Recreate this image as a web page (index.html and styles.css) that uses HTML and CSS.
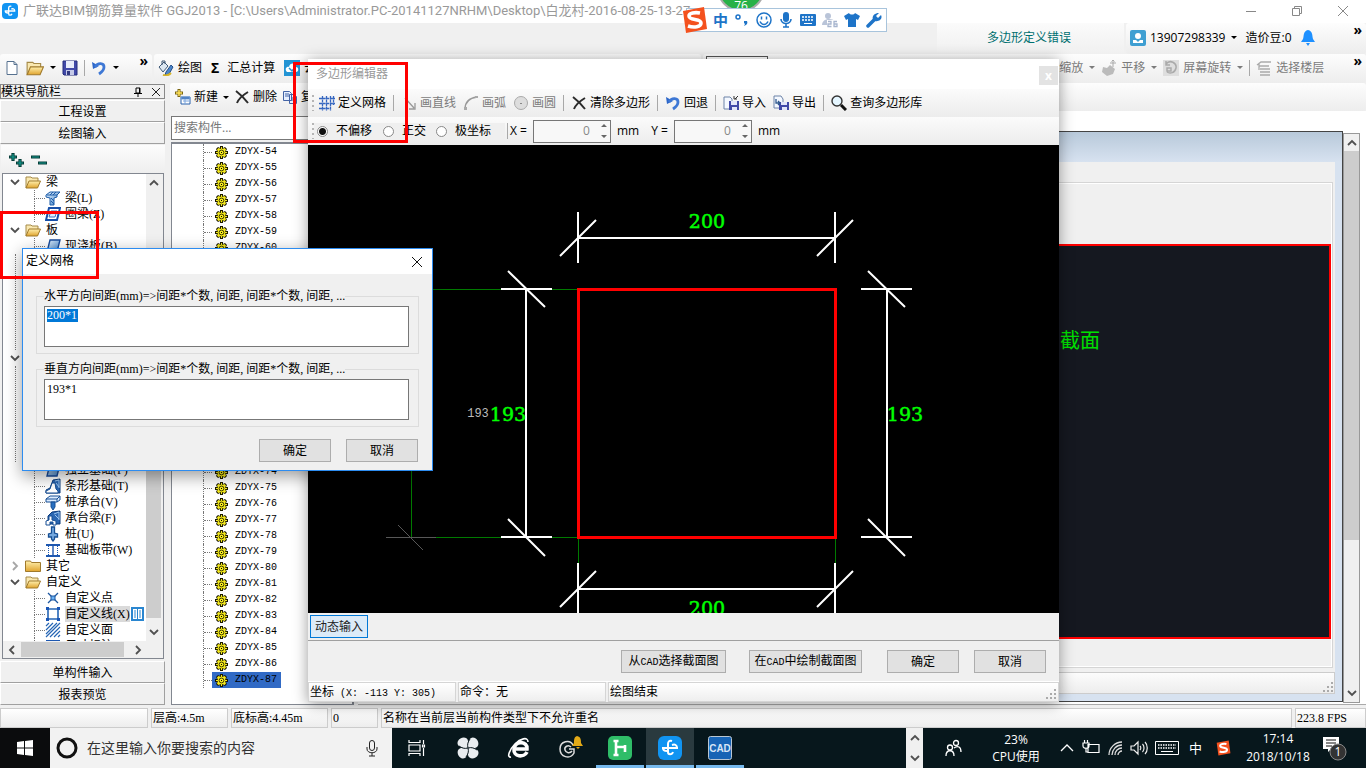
FILE: index.html
```html
<!DOCTYPE html>
<html lang="zh-CN">
<head>
<meta charset="utf-8">
<title>广联达BIM钢筋算量软件 GGJ2013</title>
<link rel="stylesheet" href="styles.css">
</head>
<body>
<svg class="defs" aria-hidden="true">
  <defs>
    <symbol id="gear" viewBox="0 0 13 13"><path d="M5 0h3v2l2-1 2 2-1 2h2v3h-2l1 2-2 2-2-1v2H5v-2l-2 1-2-2 1-2H0V5h2L1 3l2-2 2 1z" fill="#1c1a00"/><path d="M6 1h1v2l2.500-1L11 3.500 10 6h2v1h-2l1 2.500L9.500 11 7 10v2H6v-2l-2.500 1L2 9.500 3 7H1V6h2L2 3.500 3.500 2 6 3z" fill="#f5ea1c"/><circle cx="6.500" cy="6.500" r="2.400" fill="none" stroke="#2c2900" stroke-width=".9"/><path d="M6 6h1v1H6z" fill="#000"/></symbol>
    <linearGradient id="gold" x2="0" y2="1"><stop stop-color="#fff0ae"/><stop offset="1" stop-color="#e0a42e"/></linearGradient>
    <linearGradient id="steel" x2="1" y2="1"><stop stop-color="#e8f4ff"/><stop offset="1" stop-color="#3c80c8"/></linearGradient>
    <symbol id="open" viewBox="0 0 16 16"><path d="M1 14V3h5l1 1h6v3" fill="#f9e8b0" stroke="#a58a48"/><path d="M1 14L4 7h11.500l-3 7z" fill="url(#gold)" stroke="#a07a2c"/></symbol>
    <symbol id="folder" viewBox="0 0 16 16"><path d="M.5 13.500V3h5l1 1.500h9v9z" fill="url(#gold)" stroke="#a07a2c"/></symbol>
    <symbol id="down" viewBox="0 0 10 10"><path d="M1 3l4 4 4-4" fill="none" stroke="#505050" stroke-width="1.800"/></symbol>
    <symbol id="beam" viewBox="0 0 16 16"><path d="M1 5l4-3h10l-3 3v2l-3 1v7H5V8L1 7z" fill="url(#steel)" stroke="#1d5ca8"/><path d="M2 5h10M6 8l3 3M6 11l3 3M11 2l-3 3M8 2L5 5" stroke="#1d5ca8"/></symbol>
    <symbol id="ring" viewBox="0 0 16 16"><path d="M4 2h11l-3 12H1z" fill="#fff" stroke="#174fa8" stroke-width="2"/><path d="M6 5h6l-2 6H4z" fill="#dcecff" stroke="#3d73bd"/></symbol>
    <symbol id="slab" viewBox="0 0 16 16"><path d="M5 2h10l-3 12H2z" fill="url(#steel)" stroke="#184b9c" stroke-width="1.400"/></symbol>
    <symbol id="strip" viewBox="0 0 16 16"><path d="M1 15v-3l4-2 3-8 7-1v14z" fill="#2b67b2" stroke="#0d3c7d"/><path d="M10 3l4-1v8M11 5l3 4" stroke="#9cc6f0" fill="none"/><path d="M1 15v-2l4-2 2-6h3l1 6 2 2v2z" fill="#fff" stroke="#174f94"/></symbol>
    <symbol id="capbeam" viewBox="0 0 16 16"><path d="M3 6l4-4 8-1v13H3z" fill="#2b67b2" stroke="#0d3c7d"/><path d="M9 4l5-2v8M10 5l4 4" stroke="#9cc6f0" fill="none"/><path d="M1 15v-4l3-1V6h3v4l4 1v4H8v-3H5v3z" fill="#fff" stroke="#174f94"/></symbol>
    <symbol id="cap" viewBox="0 0 16 16"><path d="M1 5l4-3h10v4l-3 2H1z" fill="#dcecff" stroke="#174f94"/><path d="M1 5h11l3-3M12 5v3" fill="none" stroke="#174f94"/><path d="M6 8h4v5l-2 3-2-3z" fill="#276ec0" stroke="#174f94"/></symbol>
    <symbol id="pile" viewBox="0 0 16 16"><path d="M6.500 1h3v6l3 1v3h-3v2L8 15l-1.500-2v-2h-3V8l3-1z" fill="#74a8df" stroke="#174f94" stroke-width="1.300"/></symbol>
    <symbol id="band" viewBox="0 0 16 16"><path d="M1 3h14M1 14h14" stroke="#1d57b0" stroke-width="2"/><path d="M8 3v11" stroke="#1d57b0" stroke-width="1.400"/><path d="M3.500 4v9M12.500 4v9" stroke="#1d57b0" stroke-dasharray="1 1"/></symbol>
    <symbol id="point" viewBox="0 0 16 16"><path d="M3 3l10 10M13 3L3 13" stroke="#1d57a0" stroke-width="1.300"/><path d="M6 6h4v4H6z" fill="#6bb2f4" stroke="#1d57a0"/></symbol>
    <symbol id="line" viewBox="0 0 16 16"><path d="M3 3h10v10H3z" fill="none" stroke="#2565b5" stroke-width="1.600"/><path d="M1 1h3v3H1zM12 1h3v3h-3zM1 12h3v3H1zM12 12h3v3h-3z" fill="#1a55b5"/></symbol>
    <symbol id="face" viewBox="0 0 16 16"><path d="M1 4l3-3M1 8l7-7M1 12L12 1M1 15L15 1M5 15L15 5M9 15l6-6M13 15l2-2" stroke="#2565b5" stroke-width="1.200"/></symbol>
    <symbol id="cross" viewBox="0 0 16 16"><path d="M2 2c4 3 8 7 12 12M14 3C9 6 5 9 3 14" fill="none" stroke="#2b2b2b" stroke-width="2"/></symbol>
    <symbol id="undo" viewBox="0 0 16 16"><path d="M1 2l1 7 6-3z" fill="#2c66c9"/><path d="M4 7c3-5 9-4 9 0 0 3-2 5-5 7" fill="none" stroke="#3e78d5" stroke-width="2.800"/></symbol>
    <symbol id="disk" viewBox="0 0 16 16"><path d="M1 1h14v14H2L1 14z" fill="#4149a8" stroke="#252c7c"/><path d="M4 1h8v7H4z" fill="#e8ecfa"/><path d="M4 10h8v5H4z" fill="#c5cae8"/><path d="M5 11h3v4H5z" fill="#333a80"/></symbol>
    <symbol id="import" viewBox="0 0 16 16"><path d="M1 2h6l2 2v10H1z" fill="#f4f8ff" stroke="#6d83a8"/><path d="M6 6h10v9H6z" fill="#4149a8"/><path d="M8 6h6v4H8zM9 12h5v3H9z" fill="#e2e6fa"/><path d="M12 4l3-3M11 1v3h3" fill="none" stroke="#333"/></symbol>
    <symbol id="export" viewBox="0 0 16 16"><path d="M1 1h7l2 3v9H1z" fill="#f4f8ff" stroke="#6d83a8"/><path d="M6 7h10v8H6z" fill="#4149a8"/><path d="M8 7h6v3H8zM9 12h5v3H9z" fill="#e2e6fa"/><path d="M3 4v4h4M5 6l2 2-2 2" fill="none" stroke="#31598e" stroke-width="1.300"/></symbol>
    <symbol id="sogou" viewBox="0 0 28 28"><path d="M3 5l21-4 3 22-21 4z" fill="#f4511e"/><path d="M20 7c-5-1-11 0-11 3 0 5 12 2 12 7 0 4-7 5-13 3" fill="none" stroke="#fff" stroke-width="3.600"/></symbol>
    <symbol id="glodon" viewBox="0 0 24 24"><rect width="24" height="24" rx="6" fill="#1194f2"/><path d="M14 5c-3-1-4 1-4 3v8c0 3 4 3 5 0M4 12h16M5 12c0 3 2 3 4 3M14 9c3-1 5 0 5 3" fill="none" stroke="#fff" stroke-width="2"/></symbol>
  </defs>
</svg>

<div class="app">
  <header class="titlebar">
    <svg class="i16"><use href="#glodon"/></svg>
    <h1>广联达BIM钢筋算量软件 GGJ2013 - [C:\Users\Administrator.PC-20141127NRHM\Desktop\白龙村-2016-08-25-13-27-</h1>
    <div class="winbtns">
      <button aria-label="最小化"><svg viewBox="0 0 12 12"><path d="M1 6.500h10"/></svg></button>
      <button aria-label="还原"><svg viewBox="0 0 12 12"><path d="M1.500 3.500h7v7h-7zM3.500 3V1.500h7v7H9"/></svg></button>
      <button aria-label="关闭"><svg viewBox="0 0 12 12"><path d="M1 1l10 10M11 1L1 11"/></svg></button>
    </div>
  </header>

  <div class="accountbar">
    <a href="#" class="errlink">多边形定义错误</a>
    <div class="account bar">
      <svg class="i16" viewBox="0 0 16 16"><rect width="16" height="16" rx="2" fill="#3f9fd2"/><circle cx="8" cy="6" r="3" fill="#fff"/><path d="M3 13v-3h3l2 2 2-2h3v3z" fill="#fff"/></svg>
      <button class="tb">13907298339 <i class="caret"></i></button>
      <span>造价豆:0</span>
      <svg class="i16" viewBox="0 0 16 16"><path d="M8 0c5 1 4 6 5 9l2 3H1l2-3c1-3 0-8 5-9zM6 13h4l-2 3z" fill="#1e90ff"/></svg>
      <b class="more">»</b>
    </div>
  </div>

  <div class="toolbars">
    <div class="bar files">
      <button class="tb" aria-label="新建文件"><svg class="i16" viewBox="0 0 16 16"><path d="M3 1.500h7l3 3v10H3z" fill="#fff" stroke="#56718f"/><path d="M10 1.500v3h3" fill="none" stroke="#56718f"/></svg></button>
      <button class="tb" aria-label="打开"><svg class="i18"><use href="#open"/></svg><i class="caret"></i></button>
      <button class="tb" aria-label="保存"><svg class="i16"><use href="#disk"/></svg></button>
      <i class="sep"></i>
      <button class="tb" aria-label="撤销"><svg class="i16"><use href="#undo"/></svg><i class="caret"></i></button>
      <b class="more">»</b>
    </div>
    <div class="bar draw">
      <button class="tb"><svg class="i16" viewBox="0 0 16 16"><path d="M1 7l5-5 4 4-5 6z" fill="#dce7f2" stroke="#3f5977"/><path d="M4 5V1h3v3" fill="none" stroke="#3f5977"/><path d="M8 12l5-7 2 2-4 7-4 1z" fill="#4b85cb" stroke="#244f89"/><path d="M5 15c3 1 6 0 8-2" fill="none" stroke="#d6b42b" stroke-width="2"/></svg>绘图</button>
      <button class="tb"><b class="sigma">Σ</b>汇总计算</button>
      <button class="tb"><svg class="i16" viewBox="0 0 16 16"><path d="M0 0h16v16H0z" fill="#2394d4"/><path d="M3 12c-3-3 0-6 2-5 1-5 7-4 7 0 3 0 3 5 0 5z" fill="#fff"/><path d="M5 8l3 3 5-6" fill="none" stroke="#2394d4" stroke-width="1.500"/></svg>云</button>
    </div>
    <div class="bar view">
      <input class="floor" aria-label="楼层">
      <button class="tb off push">缩放 <i class="caret"></i></button>
      <button class="tb off"><svg class="i16" viewBox="0 0 16 16"><path d="M2 7l4 1 3-3 5 4-2 5-6 2-5-4z" fill="#bbb"/><path d="M12 0v7M9 3h6M10.500 1.500L12 0l1.500 1.500" fill="none" stroke="#aaa"/></svg>平移 <i class="caret"></i></button>
      <button class="tb off"><svg class="i16" viewBox="0 0 16 16"><path d="M0 0h16v16H0z" fill="#dedede"/><path d="M3 4c4-5 11-1 10 4s-6 6-9 4M3 1v4h4M4 8h4v3H4z" fill="none" stroke="#aaa" stroke-width="1.500"/></svg>屏幕旋转<i class="caret"></i></button>
      <i class="sep"></i>
      <button class="tb off"><svg class="i16" viewBox="0 0 16 16"><path d="M1 5l4-3h10M3 6h10M4 9h10M4 12h10M4 15h10M3 4v6" fill="none" stroke="#aaa" stroke-width="1.300"/></svg>选择楼层</button>
      <b class="more">»</b>
    </div>
  </div>

  <main class="work">
    <aside class="nav">
      <div class="navhead"><span>模块导航栏</span>
        <button aria-label="固定"><svg viewBox="0 0 10 10"><path d="M3 1h4v5H3zM1 6.500h8M5 7v3M6.500 1v5" fill="none" stroke="#000"/></svg></button>
        <button aria-label="关闭导航"><svg viewBox="0 0 10 10"><path d="M1 1l8 8M9 1L1 9" stroke="#222"/></svg></button>
      </div>
      <button class="navbtn">工程设置</button>
      <button class="navbtn">绘图输入</button>
      <div class="fold"><svg viewBox="0 0 40 16" aria-label="展开 折叠"><path d="M1 4h8M5 0v8M8 10h8M12 6v8M23 4h9M30 10h9" stroke="#063d38" stroke-width="3.200" fill="none"/><path d="M2 4h6M5 1v6M9 10h6M12 7v6M24 4h7M31 10h7" stroke="#159a8d" stroke-width="1.200" fill="none"/></svg></div>
      <div class="treebox">
        <div class="treeview">
          <ul class="tree">
            <li class="g"><svg class="ch"><use href="#down"/></svg><svg class="i16"><use href="#open"/></svg>梁</li>
            <li class="c"><svg class="i16"><use href="#beam"/></svg>梁(L)</li>
            <li class="c"><svg class="i16"><use href="#ring"/></svg>圈梁(Z)</li>
            <li class="g"><svg class="ch"><use href="#down"/></svg><svg class="i16"><use href="#open"/></svg>板</li>
            <li class="c"><svg class="i16"><use href="#slab"/></svg>现浇板(B)</li>
            <li class="run"></li>
            <li class="g"><svg class="ch"><use href="#down"/></svg><svg class="i16"><use href="#open"/></svg>基础</li>
            <li class="run"></li>
            <li class="c"><svg class="i16"><use href="#slab"/></svg>独立基础(P)</li>
            <li class="c"><svg class="i16"><use href="#strip"/></svg>条形基础(T)</li>
            <li class="c"><svg class="i16"><use href="#cap"/></svg>桩承台(V)</li>
            <li class="c"><svg class="i16"><use href="#capbeam"/></svg>承台梁(F)</li>
            <li class="c"><svg class="i16"><use href="#pile"/></svg>桩(U)</li>
            <li class="c"><svg class="i16"><use href="#band"/></svg>基础板带(W)</li>
            <li class="g"><svg class="ch shut"><use href="#down"/></svg><svg class="i16"><use href="#folder"/></svg>其它</li>
            <li class="g"><svg class="ch"><use href="#down"/></svg><svg class="i16"><use href="#open"/></svg>自定义</li>
            <li class="c"><svg class="i16"><use href="#point"/></svg>自定义点</li>
            <li class="c sel"><svg class="i16"><use href="#line"/></svg><span class="pick">自定义线(X)</span><svg class="note" viewBox="0 0 13 14"><path d="M0 0h13v14H0z" fill="#2a86d0"/><path d="M2 2h4v10H2zM7 2h4v10H7z" fill="#fff"/><path d="M3 4h2M3 6h2M3 8h2M3 10h2M8 4h2M8 6h2M8 8h2M8 10h2" stroke="#2a86d0"/></svg></li>
            <li class="c"><svg class="i16"><use href="#face"/></svg>自定义面</li>
            <li class="c"><svg class="i16"><use href="#band"/></svg>尺寸标注(W)</li>
          </ul>
          <div class="vscroll"><svg class="up"><use href="#down"/></svg><i class="thumb"></i><svg><use href="#down"/></svg></div>
        </div>
        <div class="hscroll"><svg class="lf"><use href="#down"/></svg><i class="thumb"></i><svg class="rt"><use href="#down"/></svg></div>
      </div>
      <button class="navbtn">单构件输入</button>
      <button class="navbtn">报表预览</button>
    </aside>

    <div class="rest">
      <div class="bar parts">
        <button class="tb"><svg class="i16" viewBox="0 0 16 16"><path d="M4 0v8M0 4h8" stroke="#7a6510" stroke-width="3"/><path d="M4 1v6M1 4h6" stroke="#ffe25a" stroke-width="1.500"/><path d="M6 8h9v7H6z" fill="#fff" stroke="#2a62ad"/><path d="M6 8h9v2H6zM8 12h6M10 10v5" fill="#2a62ad" stroke="#7aa5dd"/></svg>新建<i class="caret"></i></button>
        <button class="tb"><svg class="i16"><use href="#cross"/></svg>删除</button>
        <button class="tb"><svg class="i16" viewBox="0 0 16 16"><path d="M1.500 2.500h6l2 2v7h-8zM7.500 5.500h5l2 2v7h-7z" fill="#e6efff" stroke="#4363a5"/><path d="M3 5h4M3 7h4M9 9h4M9 11h4" stroke="#4363a5"/></svg>复制</button>
      </div>
      <div class="panes">
        <section class="parts-list">
          <input class="search" placeholder="搜索构件..." aria-label="搜索构件">
          <ul class="zlist" id="zlist"></ul>
        </section>
        <section class="stage">
          <div class="mdi">
            <div class="mdi-in">
              <div class="mdi-group"><div class="preview">截面</div></div>
              <div class="mdi-status"><svg class="grip"><path d="M8 1h2M8 5h2M8 9h2M4 5h2M4 9h2M0 9h2" stroke="#aaa" stroke-width="2"/></svg></div>
            </div>
          </div>
          <div class="vscroll big"><svg class="up"><use href="#down"/></svg><i class="thumb"></i><svg><use href="#down"/></svg></div>
        </section>
      </div>
    </div>
  </main>

  <footer class="status">
    <span class="s1"></span><span class="s2">层高:4.5m</span><span class="s3">底标高:4.45m</span><span class="s4">0</span><span class="s5">名称在当前层当前构件类型下不允许重名</span><span class="s6">223.8 FPS</span>
  </footer>

  <nav class="taskbar">
    <button class="start" aria-label="开始"><svg class="i16" viewBox="0 0 16 16"><path d="M0 2l7-1v6.500H0zM8 1l8-1v7.500H8zM0 8.500h7V15l-7-1zM8 8.500h8V16l-8-1z" fill="#fff"/></svg></button>
    <div class="cortana"><svg viewBox="0 0 22 22" class="i22"><circle cx="11" cy="11" r="9" fill="none" stroke="#111" stroke-width="3"/></svg><input aria-label="搜索" placeholder="在这里输入你要搜索的内容"><svg class="i18" viewBox="0 0 18 18"><rect x="6.500" y="1.500" width="5" height="10" rx="2.500" fill="none" stroke="#222"/><path d="M4 8v2c0 5 10 5 10 0V8M9 14v3M6 17h6" fill="none" stroke="#222"/></svg></div>
    <div class="apps">
      <button aria-label="任务视图"><svg viewBox="0 0 24 24"><path d="M4 4V6.500h11V4M4 20v-2.500h11V20M4 9h11v6H4zM18.500 4v4M18.500 12v8M17.500 9h2v2h-2z" fill="none" stroke="#fff" stroke-width="1.200"/></svg></button>
      <button aria-label="浏览器"><svg viewBox="0 0 24 24"><g fill="#e9edf0"><path d="M12 12C4 13 0 9 2 5s9-5 10 0z"/><path d="M12 12c-1-8 3-12 7-10s5 9 0 10z"/><path d="M12 12c8-1 12 3 10 7s-9 5-10 0z"/><path d="M12 12c1 8-3 12-7 10s-5-9 0-10z"/></g><path d="M12 12c-1-4 0-6 2-9M12 12c4-1 6 0 9 2M12 12c1 4 0 6-2 9M12 12c-4 1-6 0-9-2" stroke="#08161c" fill="none"/></svg></button>
      <button aria-label="IE"><svg viewBox="0 0 24 24"><path d="M20 16c-3 6-14 5-13-3 1-9 14-8 13 0H8" fill="none" stroke="#fff" stroke-width="3.600"/><path d="M4 21c-5 1-1-8 4-13S21 0 21 6" fill="none" stroke="#fff" stroke-width="1.600"/></svg></button>
      <button aria-label="管家"><svg viewBox="0 0 30 24" class="wide"><path d="M18 9c-3-6-13-4-13 4s10 11 14 4v-4h-5M16 11c-3-3-7 0-6 3s5 4 7 1" fill="none" stroke="#ddd" stroke-width="1.500"/><path d="M22 0c4 1 4 4 4 7l2 3H17l2-3c0-3 0-6 3-7zM21 11h4l-2 2z" fill="#e3aa17"/></svg></button>
      <button aria-label="绿色应用" class="run"><svg viewBox="0 0 24 24"><rect width="24" height="24" rx="5" fill="#2fbd68"/><path d="M8 5v14M5.500 5h5M5.500 19h5M8 11h10M17 9v7" stroke="#fff" stroke-width="2.600" fill="none"/></svg></button>
      <button aria-label="广联达" class="run active"><svg><use href="#glodon"/></svg></button>
      <button aria-label="CAD" class="run"><svg viewBox="0 0 24 24"><rect x=".5" y=".5" width="23" height="23" rx="2" fill="#1764b5" stroke="#b9c6d2"/><text x="12" y="16" text-anchor="middle" class="cadtext">CAD</text></svg></button>
    </div>
    <div class="tscroll"><svg class="up"><use href="#down"/></svg><svg><use href="#down"/></svg></div>
    <div class="tray">
      <svg class="i18 people" viewBox="0 0 18 18"><g fill="none" stroke="#fff" stroke-width="1.300"><circle cx="12" cy="4" r="2.500"/><circle cx="6" cy="8.500" r="2.500"/><path d="M2 17c0-7 8-7 8 0M10 9c4-3 7-1 7 4"/></g></svg>
      <div class="cpu">23%<br>CPU使用</div>
      <svg class="i16" viewBox="0 0 16 16"><path d="M2 11l6-6 6 6" fill="none" stroke="#fff" stroke-width="1.300"/></svg>
      <svg class="i18" viewBox="0 0 18 18"><path d="M6 5.500h11v8H6zM17 8v3M1 4h6v3c0 3-6 3-6 0zM2.500 4V1M5.500 4V1M4 9v4h2" fill="none" stroke="#fff" stroke-width="1.200"/></svg>
      <svg class="i16" viewBox="0 0 16 16"><g fill="none" stroke="#ddd" stroke-width="1.300"><path d="M2 15C2 8 8 2 15 2M5 15c0-5 4-10 10-10M8 15c0-4 3-7 7-7M11 15c0-2 2-4 4-4"/></g></svg>
      <svg class="i18" viewBox="0 0 18 18"><path d="M1 7h3l4-4v12l-4-4H1zM10 7c1 1 1 3 0 4M12.500 5c2 2 2 6 0 8M15 3c3 3 3 9 0 12" fill="none" stroke="#eee" stroke-width="1.200"/></svg>
      <svg class="kb" viewBox="0 0 24 14"><path d="M.5.500h23v13H.5z" fill="none" stroke="#fff"/><path d="M3 4h18M3 7h18" stroke="#fff" stroke-width="1.400" stroke-dasharray="1.500 1"/><path d="M6 10.500h12" stroke="#fff"/></svg>
      <span class="ime">中</span>
      <svg class="i16"><use href="#sogou"/></svg>
      <div class="clock">17:14<br>2018/10/18</div>
      <svg class="bell" viewBox="0 0 26 26"><path d="M1 2h16v12H9l-3 3v-3H1z" fill="#fff"/><path d="M4 5h10M4 8h10M4 11h6" stroke="#111"/><circle cx="16" cy="17" r="8" fill="#333" stroke="#888"/><text x="16" y="21" text-anchor="middle" class="belltext">1</text></svg>
    </div>
  </nav>
</div>

<section class="editor" aria-label="多边形编辑器">
  <div class="ehead"><h2>多边形编辑器</h2><button class="eclose" aria-label="关闭编辑器">x</button></div>
  <div class="ebar">
    <i class="handle"></i>
    <button class="tb"><svg class="i16" viewBox="0 0 16 16"><path d="M0 3.500h16M0 8.500h16M0 13.500h12M3.500 1v15M7.500 1v15M11.500 1v15M14.500 1v9" stroke="#3566c0" stroke-width="1.300" stroke-dasharray="3 .6"/></svg>定义网格</button>
    <i class="sep"></i>
    <button class="tb off"><svg class="i16" viewBox="0 0 16 16"><path d="M4 3l9 10M14 8v6H8" fill="none" stroke="#999" stroke-width="1.300"/></svg>画直线</button>
    <button class="tb off"><svg class="i16" viewBox="0 0 16 16"><path d="M2 14C2 7 7 3 14 2" fill="none" stroke="#999" stroke-width="1.300"/><path d="M1 12h3v3H1zM12 1h3v2h-3z" fill="#aaa"/></svg>画弧</button>
    <button class="tb off"><svg class="i16" viewBox="0 0 16 16"><circle cx="8" cy="8" r="6.500" fill="#ddd" stroke="#aaa"/><path d="M7 8h2v1H7z" fill="#888"/></svg>画圆</button>
    <i class="sep"></i>
    <button class="tb"><svg class="i16"><use href="#cross"/></svg>清除多边形</button>
    <i class="sep"></i>
    <button class="tb"><svg class="i16"><use href="#undo"/></svg>回退</button>
    <i class="sep"></i>
    <button class="tb"><svg class="i16"><use href="#import"/></svg>导入</button>
    <button class="tb"><svg class="i16"><use href="#export"/></svg>导出</button>
    <i class="sep"></i>
    <button class="tb"><svg class="i16" viewBox="0 0 16 16"><circle cx="6" cy="6" r="5" fill="#e5f6ff" stroke="#333" stroke-width="1.400"/><path d="M10 10l5 5" stroke="#111" stroke-width="3"/></svg>查询多边形库</button>
  </div>
  <div class="ebar opts">
    <i class="handle"></i>
    <div class="radios">
      <label><input type="radio" name="off" checked>不偏移</label>
      <label><input type="radio" name="off">正交</label>
      <label><input type="radio" name="off">极坐标</label>
    </div>
    <i class="sep"></i>
    <label class="coord">X = <span class="spin"><input value="0"><svg viewBox="0 0 8 16"><path d="M1 4l3-3 3 3zM1 12l3 3 3-3z"/></svg></span>mm</label>
    <label class="coord">Y = <span class="spin"><input value="0"><svg viewBox="0 0 8 16"><path d="M1 4l3-3 3 3zM1 12l3 3 3-3z"/></svg></span>mm</label>
  </div>
  <svg class="canvas" viewBox="308 145 751 468" preserveAspectRatio="xMidYMid slice">
    <g stroke="#007a00" fill="none"><path d="M411 289.500h167M411 537.500h167M411.500 289v248M578.500 539v24M835.500 539v24"/></g>
    <g stroke="#585858" fill="none"><path d="M386 537.500h50M398 525l25 25"/></g>
    <g stroke="#fff" stroke-width="2" fill="none">
      <path d="M578 238h257M578 212v51M835 212v51M560 256l36-36M817 256l36-36"/>
      <path d="M578 589h257M578 563v52M835 563v52M560 607l36-36M817 607l36-36"/>
      <path d="M526 289v248M501 289h51M501 537h51M508 271l37 36M508 519l37 37"/>
      <path d="M887 289v248M861 289h51M861 537h51M868 271l37 36M868 519l37 37"/>
    </g>
    <path d="M578.500 289.500h257v248h-257z" fill="none" stroke="#f00" stroke-width="3"/>
    <g class="dims"><text x="707" y="228">200</text><text x="707" y="615">200</text><text x="508" y="421">193</text><text x="905" y="421">193</text></g>
    <text class="dimsmall" x="478" y="417">193</text>
  </svg>
  <div class="dyn"><button>动态输入</button></div>
  <div class="actions">
    <button class="btn cad">从<span class="hw">CAD</span>选择截面图</button>
    <button class="btn cad wide">在<span class="hw">CAD</span>中绘制截面图</button>
    <button class="btn">确定</button>
    <button class="btn">取消</button>
  </div>
  <div class="estatus"><span>坐标<b class="hw"> (X: -113 Y: 305)</b></span><span>命令：无</span><span class="fill">绘图结束<svg class="grip"><path d="M8 1h2M8 5h2M8 9h2M4 5h2M4 9h2M0 9h2" stroke="#aaa" stroke-width="2"/></svg></span></div>
</section>

<form class="dialog" aria-label="定义网格">
  <div class="dhead"><h2>定义网格</h2><button type="button" aria-label="关闭对话框"><svg viewBox="0 0 12 12"><path d="M1 1l10 10M11 1L1 11" stroke="#111"/></svg></button></div>
  <div class="dbody">
    <fieldset><legend><label for="hor">水平方向间距(mm)=&gt;间距*个数, 间距, 间距*个数, 间距, ...</label></legend>
      <div class="field hot"><textarea id="hor">200*1</textarea></div></fieldset>
    <fieldset><legend><label for="ver">垂直方向间距(mm)=&gt;间距*个数, 间距, 间距*个数, 间距, ...</label></legend>
      <div class="field"><textarea id="ver">193*1</textarea></div></fieldset>
    <div class="dbtns"><button type="button" class="btn">确定</button><button type="button" class="btn">取消</button></div>
  </div>
</form>

<div class="mark mark-grid"></div>
<div class="mark mark-title"></div>

<div class="badge76">76</div>
<div class="imebar">
  <svg class="slogo"><use href="#sogou"/></svg>
  <b>中</b>
  <svg viewBox="0 0 16 16"><circle cx="4" cy="5" r="2" fill="none" stroke="#1e74c8" stroke-width="1.500"/><path d="M10 9h3c1 2 0 4-3 5l1-2-1-1z" fill="#1e74c8"/></svg>
  <svg viewBox="0 0 16 16"><circle cx="8" cy="8" r="7" fill="none" stroke="#1e74c8" stroke-width="1.500"/><path d="M5.500 4.500v3M10.500 4.500v3M4 9.500c2 4 6 4 8 0" fill="none" stroke="#1e74c8" stroke-width="1.500"/></svg>
  <svg viewBox="0 0 16 16"><rect x="5" width="6" height="10" rx="3" fill="#1e74c8"/><path d="M3 7c0 6 10 6 10 0M8 12v3M5 15h6" fill="none" stroke="#1e74c8" stroke-width="1.600"/></svg>
  <svg viewBox="0 0 16 16"><rect y="2" width="16" height="12" rx="1" fill="#1e74c8"/><path d="M2 5h12M2 8h12" stroke="#fff" stroke-width="1.500" stroke-dasharray="2 1"/><path d="M4 11.500h8" stroke="#fff"/></svg>
  <svg viewBox="0 0 16 16"><circle cx="6" cy="4" r="3" fill="#b9c4d8"/><path d="M0 13c0-7 11-7 12-4v4z" fill="#b9c4d8"/><path d="M5 8h11v8H5z" fill="#fff"/><path d="M6 9.500h3v2.500H6v2.500h3.500M15 9.500h-3v5h3V12h-3" fill="none" stroke="#a7b5ce" stroke-width="1.300"/></svg>
  <svg viewBox="0 0 16 16"><path d="M5 1c1 2 5 2 6 0l5 3-2 4-2-1v8H4V7L2 8 0 4z" fill="#1e74c8"/></svg>
  <svg viewBox="0 0 16 16"><path d="M2 14l7-7" stroke="#1e74c8" stroke-width="3.500" stroke-linecap="round"/><path d="M13 1l-3 3 2 2 3-3c2 4-2 7-6 6S6 1 13 1z" fill="#1e74c8"/></svg>
</div>
<script src="app.js"></script>
</body>
</html>
```
FILE: styles.css
```css
* { box-sizing: border-box; }
html, body { height: 100%; margin: 0; overflow: hidden; }
body { font: 12px/16px "Open Sans", "Noto Sans CJK SC", sans-serif; color: #000; background: #f0f0f0; }
button, input, textarea { font: inherit; color: inherit; margin: 0; padding: 0; border: 0; background: none; border-radius: 0; white-space: nowrap; }
h1, h2, ul, fieldset, legend { margin: 0; padding: 0; border: 0; font-size: 12px; font-weight: 400; list-style: none; }
svg { display: block; flex: none; }
.defs { position: absolute; width: 0; height: 0; }
.i16 { width: 16px; height: 16px; }
.i18 { width: 18px; height: 18px; }
.i22 { width: 22px; height: 22px; }
.hw { font: 10px/16px "Liberation Mono", monospace; white-space: pre; }
.tree, .status, legend, .field { font-family: "Liberation Serif", "Noto Sans CJK SC", serif; }
.app { height: 100%; display: flex; flex-direction: column; }

.titlebar { flex: none; height: 23px; background: #fff; display: flex; align-items: center; gap: 5px; padding: 0 0 2px 2px; color: #999; }
.titlebar h1 { flex: 1; white-space: nowrap; overflow: hidden; font: 13px/20px Roboto, "Noto Sans CJK SC", sans-serif; }
.winbtns { display: flex; }
.winbtns button { width: 46px; height: 20px; display: grid; place-items: center; }
.winbtns svg { width: 12px; height: 12px; fill: none; stroke: #888; }

.bar { display: flex; align-items: center; background: linear-gradient(#fdfdfd, #ededed); border-radius: 3px; }
.tb { display: flex; align-items: center; gap: 4px; }
.off { color: #7b7b7b; }
.caret { border: 3px solid transparent; border-top-color: currentColor; border-bottom: 0; margin-left: 2px; }
.sep { width: 1px; height: 16px; background: #a8a8a8; }
.more { font-size: 14px; line-height: 14px; margin-left: auto; align-self: flex-start; }

.accountbar { flex: none; height: 31px; display: flex; justify-content: flex-end; gap: 2px; }
.errlink { width: 187px; padding: 7px 0 0 50px; color: #007070; text-decoration: none; background: linear-gradient(#fbfbfb, #f0f0f0); }
.account { width: 240px; gap: 4px; padding: 0 4px 2px 4px; }
.account span { margin: 0 4px; }

.toolbars { flex: none; height: 29px; display: flex; gap: 2px; }
.files { width: 152px; gap: 6px; padding: 0 4px 2px 4px; }
.draw { flex: 1; gap: 9px; padding: 0 0 2px 4px; }
.view { flex: 0 0 663px; gap: 6px; padding: 0 4px 2px 3px; }
.floor { width: 62px; height: 23px; border: 1px solid #555; background: #fff; }
.push { margin-left: auto; }
.view .more { margin-left: 23px; }
.sigma { font-size: 14px; margin-right: 4px; }

.work { flex: 1; min-height: 0; display: flex; gap: 5px; }
.nav { flex: 0 0 165px; display: flex; flex-direction: column; padding: 1px 0 0; }
.navhead { display: flex; align-items: center; gap: 8px; height: 15px; border: 1px solid #888; margin-bottom: 1px; padding-right: 3px; }
.navhead span { flex: 1; }
.navhead svg { width: 10px; height: 10px; }
.navbtn { height: 22px; background: #f0f0f0; border: 1px solid #a0a0a0; border-top-color: #fff; border-left-color: #fff; flex: none; padding-top: 1px; }
.fold { height: 28px; padding: 8px 0 0 7px; background: linear-gradient(#fcfcfc, #eee); margin: 1px 0 0 1px; }
.fold svg { width: 40px; height: 16px; }
.treebox { flex: 1; min-height: 0; display: flex; flex-direction: column; margin: 0 1px 2px 2px; border: 1px solid #828790; background: #f0f0f0; }
.treeview { flex: 1; min-height: 0; display: flex; }
.tree { flex: 1; min-width: 0; background: #fff; overflow: hidden; }
.tree li { height: 16px; display: flex; align-items: center; white-space: nowrap; }
.g { padding-left: 7px; gap: 5px; }
.ch { width: 10px; height: 10px; }
.ch.shut { transform: rotate(-90deg); opacity: .5; }
.c { padding-left: 31px; position: relative; }
.c > .i16 { margin: 0 4px 0 11px; }
.c::before { content: ""; position: absolute; left: 31px; top: 0; width: 10px; height: 8px; border-left: 1px dotted #777; border-bottom: 1px dotted #777; }
.c::after { content: ""; position: absolute; left: 31px; top: 8px; height: 8px; border-left: 1px dotted #777; }
.tree .run { height: 96px; margin-left: 12px; border-left: 1px dotted #777; }
.pick { background: #dadada; }
.note { width: 13px; height: 14px; margin-left: 1px; }
.vscroll { width: 15px; margin-right: 2px; background: #f0f0f0; display: flex; flex-direction: column; align-items: center; justify-content: space-between; padding: 4px 0; }
.vscroll svg, .hscroll svg, .tscroll svg { width: 10px; height: 10px; }
.up { transform: rotate(180deg); }
.lf { transform: rotate(90deg); }
.rt { transform: rotate(-90deg); }
.thumb { background: #cdcdcd; }
.vscroll .thumb { width: 15px; flex: 1; margin: 110px 0 9px; }
.hscroll { height: 17px; display: flex; align-items: center; gap: 4px; padding: 0 20px 0 4px; }
.hscroll .thumb { flex: 1; height: 15px; }
.hscroll .rt { margin-left: 5px; }

.rest { flex: 1; min-width: 0; display: flex; flex-direction: column; }
.parts { flex: none; height: 28px; gap: 5px; padding-left: 5px; }
.parts .tb { gap: 3px; }
.panes { flex: 1; min-height: 0; display: flex; gap: 4px; }
.parts-list { flex: 0 0 184px; display: flex; flex-direction: column; gap: 2px; padding: 5px 0 0 1px; }
.search { height: 24px; border: 1px solid #777; background: #fff; padding-left: 2px; padding-bottom: 2px; }
.search::placeholder { color: #777; opacity: 1; }
.zlist { flex: 1; background: #fff; border: 1px solid #828790; border-width: 2px 2px 1px 1px; padding-left: 31px; overflow: hidden; }
.zlist li { display: flex; align-items: center; height: 16px; border-left: 1px dotted #777; font: 10px/16px "Liberation Mono", monospace; }
.zlist li::before { content: ""; width: 8px; border-top: 1px dotted #777; }
.zlist span { display: flex; align-items: center; gap: 7px; padding: 0 4px 0 3px; height: 16px; }
.zlist svg { width: 13px; height: 13px; }
.zlist .on span { background: #316ac5; }
.stage { flex: 1; display: flex; background: #fff; padding: 20px 6px 2px 0; border-bottom: 1px solid #aaa; }
.mdi { flex: 1; border: 1px solid #444; background: #d7e2f0 linear-gradient(#b8c9da, #d7e2f0) top / 100% 30px no-repeat; padding: 30px 7px 7px; display: flex; }
.mdi-in { flex: 1; background: #f0f0f0; padding-top: 20px; display: flex; flex-direction: column; }
.mdi-group { flex: 1; border: 1px solid #d5d5d5; border-left: 0; outline: 1px solid #fff; outline-offset: -2px; margin-right: 2px; padding: 61px 1px 28px 0; display: flex; }
.preview { flex: 1; background: #151820; border: 2px solid #f00; display: flex; justify-content: flex-end; padding: 83px 229px 0 0; color: #00e000; font-size: 20px; line-height: 24px; }
.mdi-status { height: 22px; margin-top: 4px; border: 1px solid #ccc; background: linear-gradient(#fcfcfc, #ededed); display: flex; justify-content: flex-end; align-items: flex-end; }
.grip { width: 11px; height: 11px; }
.vscroll.big { margin: 3px 1px 0 1px; outline: 1px solid #999; }
.vscroll.big .thumb { margin: 3px 0 148px; }

.status { flex: none; height: 23px; display: flex; gap: 3px; padding: 3px 0 0; }
.status > span { border: 1px solid #ccc; background: linear-gradient(#fff, #ededed); padding: 1px 0 0 1px; white-space: nowrap; }
.s1 { width: 148px; } .s2 { width: 77px; } .s3 { width: 97px; } .s4 { width: 47px; } .s5 { flex: 1; } .s6 { width: 71px; }

.taskbar { flex: none; height: 40px; display: flex; background: #07171c; color: #fff; }
.start { width: 50px; display: grid; place-items: center; background: #0b0c0d; }
.cortana { width: 342px; background: #f2f2f2; display: flex; align-items: center; gap: 9px; padding: 0 11px 0 6px; color: #333; }
.cortana input { flex: 1; min-width: 0; font-size: 14px; }
.cortana input::placeholder { color: #333; opacity: 1; }
.apps { display: flex; gap: 2px; }
.apps button { width: 49px; display: grid; place-items: center; }
.apps svg { width: 24px; height: 24px; }
.apps .wide { width: 30px; }
.apps .run { border: 3px solid transparent; border-width: 3px 0; border-bottom-color: #76b9ed; width: 48px; }
.apps .active { background: #2a3a3f; border-top-color: #2a3a3f; }
.cadtext { font: bold 10px "Liberation Sans", sans-serif; fill: #d8e6f5; }
.tscroll { width: 17px; margin-left: auto; background: #f0f0f0; display: flex; flex-direction: column; align-items: center; justify-content: space-between; padding: 5px 0; }
.tray { width: 443px; display: flex; align-items: center; gap: 7px; padding-left: 21px; }
.cpu { width: 72px; text-align: center; margin: 0 0 0 11px; line-height: 17px; }
.tray .kb { width: 24px; height: 14px; }
.ime { width: 14px; margin: 0 5px 0 3px; font-size: 13px; }
.clock { width: 74px; margin: 0 0 0 3px; text-align: center; line-height: 18px; }
.bell { width: 26px; height: 26px; }
.belltext { font: 12px "Open Sans", sans-serif; fill: #fff; }

.editor { position: absolute; left: 308px; right: 307px; top: 59px; bottom: 66px; display: flex; flex-direction: column; background: #f0f0f0; box-shadow: 0 2px 14px rgba(0, 0, 0, .4); }
.ehead { flex: none; height: 30px; background: #fff; display: flex; justify-content: space-between; padding: 7px 1px 0 8px; color: #999; }
.eclose { width: 19px; height: 19px; background: #e3e3e3; color: #fff; font-weight: 700; }
.ebar { flex: none; height: 28px; display: flex; align-items: center; gap: 7px; padding: 0 4px; background: linear-gradient(#fbfbfb, #ececec); }
.ebar .tb { gap: 3px; }
.handle { width: 2px; height: 16px; margin-right: -2px; background: repeating-linear-gradient(#b5b5b5 0 2px, transparent 2px 5px); }
.opts { gap: 2px; }
.radios { display: flex; background: #efefef; gap: 10px; padding: 0 14px 0 3px; }
.radios label { display: flex; align-items: center; gap: 8px; }
.radios label:nth-child(2) { margin-left: 1px; }
.radios input { appearance: none; width: 11px; height: 11px; border: 1px solid #888; border-radius: 50%; background: #fff; }
.radios input:checked { background: radial-gradient(#111 0 3px, #fff 4px); }
.coord { display: flex; align-items: center; gap: 6px; margin-right: 10px; }
.spin { width: 78px; height: 23px; border: 1px solid #777; background: #f8f8f8; display: flex; align-items: center; }
.spin input { flex: 1; min-width: 0; text-align: right; color: #888; padding-right: 10px; }
.spin svg { width: 8px; height: 16px; margin-right: 2px; fill: #666; }
.canvas { flex: 1; min-height: 0; width: 100%; background: #000; }
.dims { font: 19px "DejaVu Serif", serif; fill: #0f0; stroke: #0f0; text-anchor: middle; stroke-width: .5; }
.dimsmall { font: 12px "Liberation Mono", monospace; fill: #bbb; text-anchor: middle; }
.dyn { flex: none; height: 28px; padding: 2px; border-bottom: 1px solid #a0a0a0; }
.dyn button { width: 58px; height: 23px; border: 1px solid #0078d7; background: #dcebf8; color: #222; display: grid; place-items: center; }
.actions { flex: none; display: flex; justify-content: flex-end; padding: 9px 13px 8px; }
.btn { width: 72px; height: 23px; border: 1px solid #adadad; background: #e1e1e1; }
.actions .btn { margin-left: 15px; }
.actions .cad { width: 105px; margin-right: 8px; }
.actions .cad.wide { width: 113px; margin-right: 10px; }
.estatus { flex: none; height: 21px; display: flex; gap: 2px; border-top: 1px solid #fff; }
.estatus span { width: 148px; border: 1px solid #d5d5d5; background: linear-gradient(#fff, #eee); padding: 1px; white-space: pre; }
.estatus b { font-weight: 400; }
.estatus .fill { flex: 1; display: flex; justify-content: space-between; }
.estatus .grip { align-self: flex-end; }

.dialog { position: absolute; left: 22px; top: 248px; width: 411px; border: 1px solid #2d8cf0; background: #f0f0f0; box-shadow: 0 5px 16px rgba(0, 0, 0, .4); }
.dhead { display: flex; justify-content: space-between; height: 25px; padding: 4px 9px 4px 3px; background: #fff; }
.dhead svg { width: 12px; height: 12px; }
.dbody { padding: 14px 13px 8px; display: flex; flex-direction: column; }
fieldset { min-width: 0; height: 66px; margin-bottom: 7px; border: 1px solid #dcdcdc; padding: 0 9px 0 7px; }
legend { height: 16px; line-height: 16px; white-space: nowrap; }
.field { height: 41px; margin-top: 2px; background: #fff; border: 1px solid #777; padding: 1px 2px; }
.field textarea { display: block; width: 100%; height: 38px; resize: none; outline: 0; overflow: hidden; }
.field.hot textarea { width: 31px; height: 13px; line-height: 13px; background: #0078d7; color: #fff; margin-top: 1px; }
.dbtns { display: flex; justify-content: flex-end; gap: 15px; padding: 5px 1px 0 0; }

.mark { position: absolute; border: 3px solid #f00; pointer-events: none; }
.mark-grid { left: 293px; top: 62px; width: 115px; height: 81px; }
.mark-title { left: 0; top: 211px; width: 99px; height: 68px; }
.badge76 { position: absolute; left: 717px; top: -36px; width: 48px; height: 48px; border-radius: 50%; border: 2px solid #aaa; background: #27b148; color: #fff; text-align: center; padding-top: 32px; line-height: 16px; }
.imebar { position: absolute; left: 686px; top: 8px; width: 201px; height: 24px; border: 1px solid #a8c4dc; background: #fff; display: flex; align-items: center; justify-content: space-between; padding-right: 4px; color: #1e74c8; }
.imebar svg { width: 16px; height: 16px; }
.imebar b { font-size: 15px; }
.imebar .slogo { width: 28px; height: 28px; margin: 0 -1px 0 -7px; }
```
FILE: app.js
```js
const list = document.getElementById("zlist");
for (let n = 54; n <= 87; n++) {
  const item = document.createElement("li");
  if (n === 87) item.className = "on";
  item.innerHTML = `<span><svg><use href="#gear"/></svg>ZDYX-${n}</span>`;
  list.append(item);
}
```
